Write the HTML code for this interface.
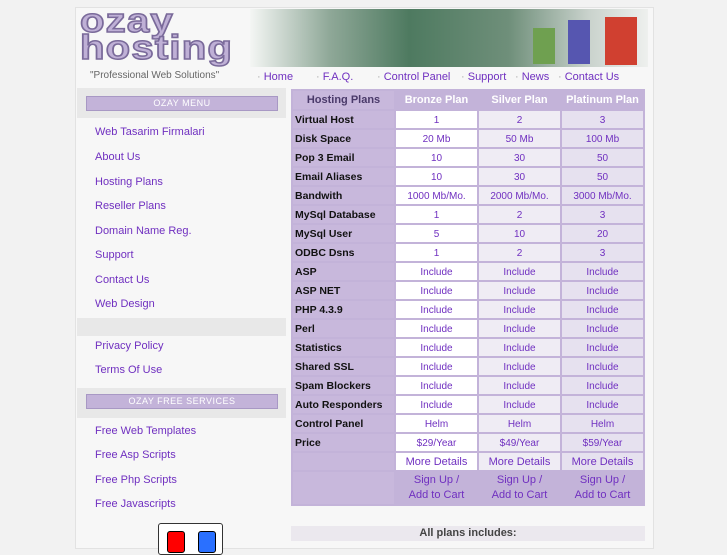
<!DOCTYPE html><html><head><style>
body{margin:0;background:#f2f2f2;font-family:"Liberation Sans",sans-serif;width:727px;height:545px;overflow:hidden;position:relative}
.a{position:absolute}
.wrap{left:75px;top:7px;width:577px;height:540px;background:#f7f7f7;border:1px solid #e2e2e2}
.logo{left:80px;top:8px;width:150px;height:58px;font:bold 34px/27px "Liberation Sans",sans-serif;color:#bfb0d6;letter-spacing:1px;-webkit-text-stroke:1.5px #7a6a9a;transform-origin:0 0;transform:scaleX(1.18)}
.ban{left:250px;top:9px;width:398px;height:58px;background:linear-gradient(90deg,#f4f6f4 0%,#8fa898 20%,#4e7a60 40%,#6f8f7a 65%,#c9d2cc 85%,#eef0ee 100%)}
.nav{top:71px;font-size:11px;color:#7030c0}
.nav span{color:#aaa}
.side div{position:absolute;left:95px;font-size:11px;color:#7030c0}
.gbar{left:77px;width:209px;background:#e8e8e8}
.bar{left:86px;width:190px;height:13px;background:#c3b3d9;border:1px solid #a898c4;color:#fff;font-size:9px;text-align:center;line-height:13px;letter-spacing:.5px}
table{position:absolute;left:291px;top:89px;width:354px;table-layout:fixed;border-collapse:separate;border-spacing:2px;background:#c3b3d9;padding:0;font-size:10px}
td{height:16px;text-align:center;color:#7030c0;padding:1px 0 0;line-height:15px;overflow:hidden;white-space:nowrap}
td.l{background:#c8b8dc;color:#111;font-weight:bold;text-align:left;padding-left:2px;font-size:10.5px}
td.b{background:#fff}td.s{background:#efecf4}td.p{background:#e6e1ef}
th{height:18px;color:#fff;font-size:11px;background:#c3b3d9;padding:0;white-space:nowrap}
</style></head><body>
<div class="a wrap"></div>
<div class="a logo">ozay<br>hosting</div>
<div class="a ban"></div>
<div class="a" style="left:533px;top:28px;width:22px;height:36px;background:#6fa050"></div>
<div class="a" style="left:568px;top:20px;width:22px;height:44px;background:#5656b0"></div>
<div class="a" style="left:605px;top:17px;width:32px;height:48px;background:#d04030"></div>
<div class="a" style="left:90px;top:70px;font-size:10px;color:#666">"Professional Web Solutions"</div>
<div class="a nav" style="left:257px"><span>·</span> Home</div>
<div class="a nav" style="left:316px"><span>·</span> F.A.Q.</div>
<div class="a nav" style="left:377px"><span>·</span> Control Panel</div>
<div class="a nav" style="left:461px"><span>·</span> Support</div>
<div class="a nav" style="left:515px"><span>·</span> News</div>
<div class="a nav" style="left:558px"><span>·</span> Contact Us</div>
<div class="a gbar" style="top:88px;height:30px"></div>
<div class="a bar" style="top:96px">OZAY MENU</div>
<div class="a gbar" style="top:318px;height:18px"></div>
<div class="a gbar" style="top:388px;height:30px"></div>
<div class="a bar" style="top:394px">OZAY FREE SERVICES</div>
<div class="side">
<div style="top:126px">Web Tasarim Firmalari</div><div style="top:151px">About Us</div><div style="top:176px">Hosting Plans</div><div style="top:200px">Reseller Plans</div><div style="top:225px">Domain Name Reg.</div><div style="top:249px">Support</div><div style="top:274px">Contact Us</div><div style="top:298px">Web Design</div>
<div style="top:340px">Privacy Policy</div><div style="top:364px">Terms Of Use</div>
<div style="top:425px">Free Web Templates</div><div style="top:449px">Free Asp Scripts</div><div style="top:474px">Free Php Scripts</div><div style="top:498px">Free Javascripts</div>
</div>
<div class="a" style="left:158px;top:523px;width:63px;height:30px;background:#fff;border:1px solid #333;border-radius:3px"></div>
<div class="a" style="left:167px;top:531px;width:16px;height:20px;background:#f00;border:1px solid #000;border-radius:3px"></div>
<div class="a" style="left:198px;top:531px;width:16px;height:20px;background:#2a70ff;border:1px solid #000;border-radius:3px"></div>
<table>
<colgroup><col style="width:101px"><col style="width:81px"><col style="width:81px"><col style="width:81px"></colgroup>
<tr><th style="color:#4a3a6a;background:#c8b8dc">Hosting Plans</th><th>Bronze Plan</th><th>Silver Plan</th><th>Platinum Plan</th></tr>
<tr><td class="l">Virtual Host</td><td class="b">1</td><td class="s">2</td><td class="p">3</td></tr>
<tr><td class="l">Disk Space</td><td class="b">20 Mb</td><td class="s">50 Mb</td><td class="p">100 Mb</td></tr>
<tr><td class="l">Pop 3 Email</td><td class="b">10</td><td class="s">30</td><td class="p">50</td></tr>
<tr><td class="l">Email Aliases</td><td class="b">10</td><td class="s">30</td><td class="p">50</td></tr>
<tr><td class="l">Bandwith</td><td class="b">1000 Mb/Mo.</td><td class="s">2000 Mb/Mo.</td><td class="p">3000 Mb/Mo.</td></tr>
<tr><td class="l">MySql Database</td><td class="b">1</td><td class="s">2</td><td class="p">3</td></tr>
<tr><td class="l">MySql User</td><td class="b">5</td><td class="s">10</td><td class="p">20</td></tr>
<tr><td class="l">ODBC Dsns</td><td class="b">1</td><td class="s">2</td><td class="p">3</td></tr>
<tr><td class="l">ASP</td><td class="b">Include</td><td class="s">Include</td><td class="p">Include</td></tr>
<tr><td class="l">ASP NET</td><td class="b">Include</td><td class="s">Include</td><td class="p">Include</td></tr>
<tr><td class="l">PHP 4.3.9</td><td class="b">Include</td><td class="s">Include</td><td class="p">Include</td></tr>
<tr><td class="l">Perl</td><td class="b">Include</td><td class="s">Include</td><td class="p">Include</td></tr>
<tr><td class="l">Statistics</td><td class="b">Include</td><td class="s">Include</td><td class="p">Include</td></tr>
<tr><td class="l">Shared SSL</td><td class="b">Include</td><td class="s">Include</td><td class="p">Include</td></tr>
<tr><td class="l">Spam Blockers</td><td class="b">Include</td><td class="s">Include</td><td class="p">Include</td></tr>
<tr><td class="l">Auto Responders</td><td class="b">Include</td><td class="s">Include</td><td class="p">Include</td></tr>
<tr><td class="l">Control Panel</td><td class="b">Helm</td><td class="s">Helm</td><td class="p">Helm</td></tr>
<tr><td class="l">Price</td><td class="b">$29/Year</td><td class="s">$49/Year</td><td class="p">$59/Year</td></tr>
<tr><td class="l"></td><td class="b" style="font-size:11px">More Details</td><td class="s" style="font-size:11px">More Details</td><td class="p" style="font-size:11px">More Details</td></tr>
<tr><td class="l" style="height:32px;padding:0"></td><td style="background:#c3b3d9;font-size:11px;line-height:15px;padding:0;white-space:normal">Sign Up /<br>Add to Cart</td><td style="background:#c3b3d9;font-size:11px;line-height:15px;padding:0;white-space:normal">Sign Up /<br>Add to Cart</td><td style="background:#c3b3d9;font-size:11px;line-height:15px;padding:0;white-space:normal">Sign Up /<br>Add to Cart</td></tr>
</table>
<div class="a" style="left:291px;top:526px;width:354px;height:15px;background:#ebe8ee;text-align:center;font-size:11px;font-weight:bold;color:#444;line-height:15px">All plans includes:</div>
</body></html>
